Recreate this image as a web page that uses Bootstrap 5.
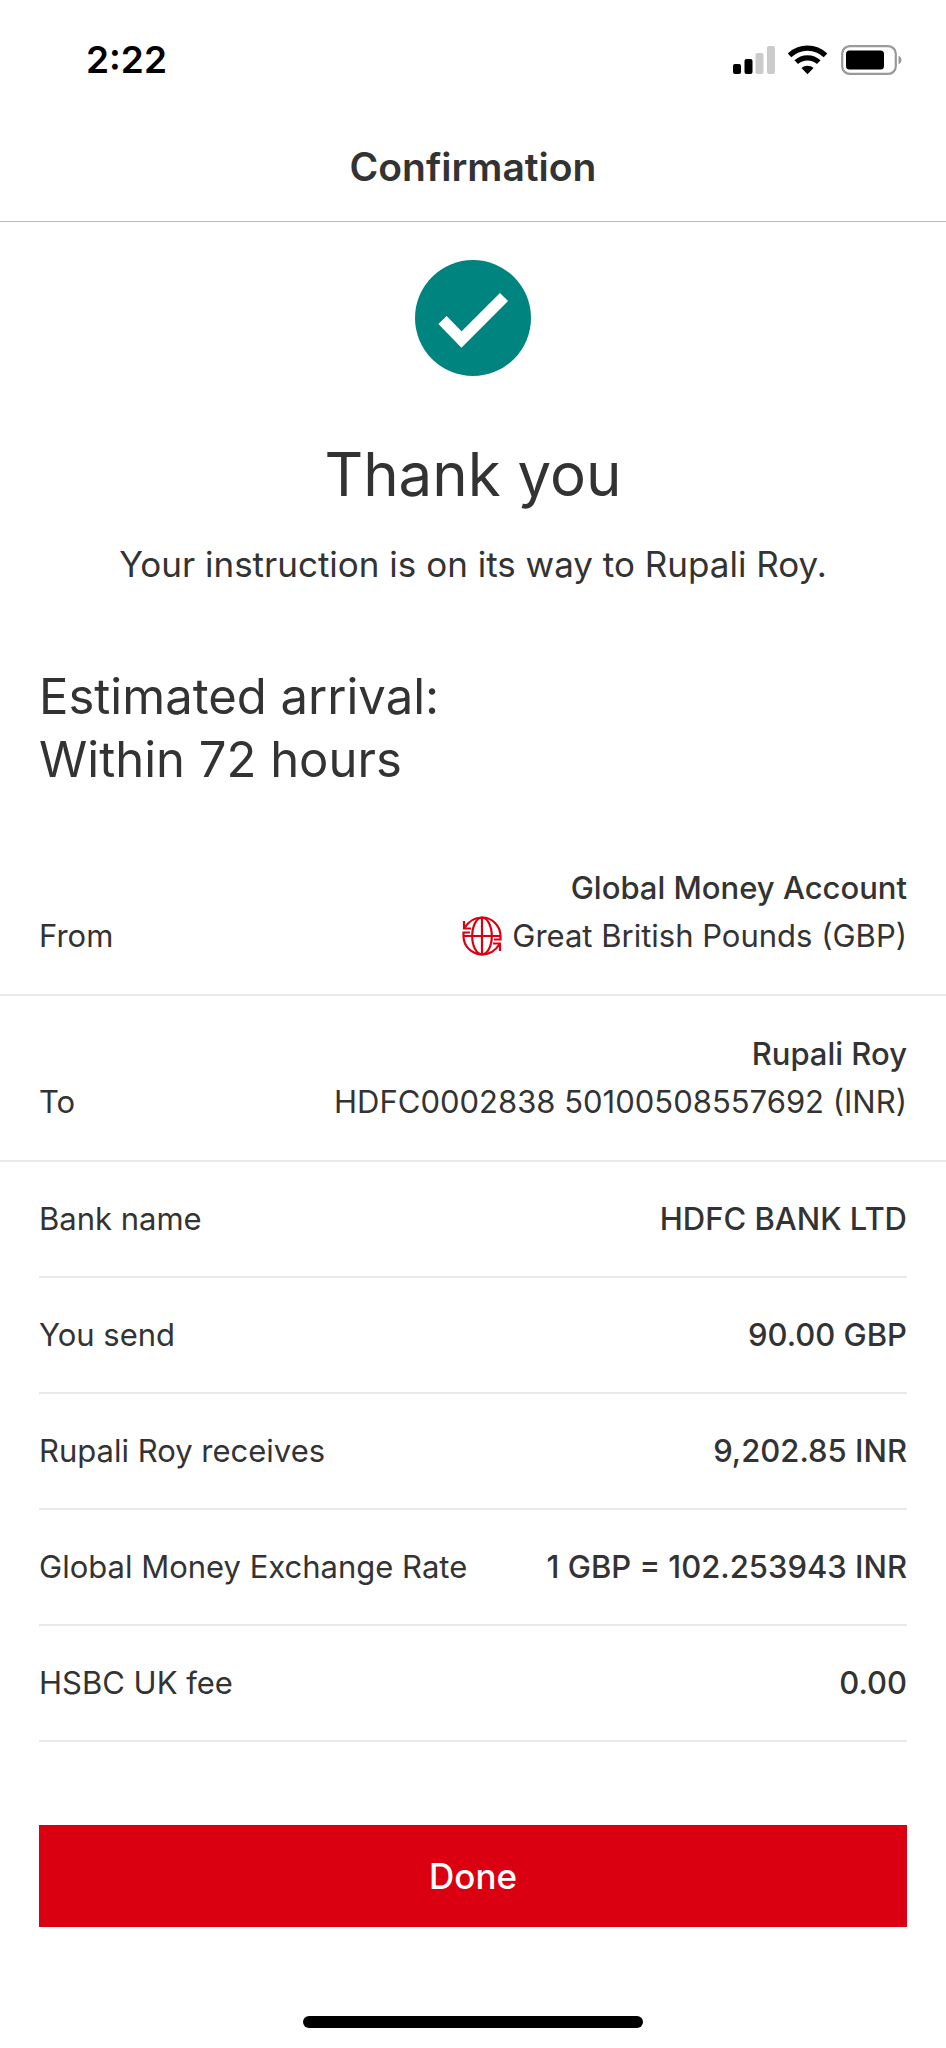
<!DOCTYPE html>
<html lang="en">
<head>
<meta charset="utf-8">
<meta name="viewport" content="width=device-width, initial-scale=1">
<title>Confirmation</title>
<link href="https://cdn.jsdelivr.net/npm/bootstrap@5.3.0/dist/css/bootstrap.min.css" rel="stylesheet">
<style>
  body { font-family: Inter, "Liberation Sans", sans-serif; font-size: 31px; line-height: 48px; color: #333; background: #fff; }
  .status-bar { height: 120px; padding: 0 43px 0 86px; color: #000; }
  .status-icons { gap: 13px; }
  .clock { font-size: 37px; font-weight: 600; }
  .title-bar { height: 102px; padding-top: 23px; border-bottom: 1px solid #bbb; }
  .title-bar h1 { font-size: 39px; line-height: 48px; font-weight: 600; }
  .side-pad { padding-left: 39px; padding-right: 39px; }
  .done-mark { margin: 38px 0 60px; }
  .thanks { font-size: 60px; line-height: 76px; font-weight: 400; margin-bottom: 28px; }
  .message { font-size: 35px; margin-bottom: 77px; }
  .arrival { font-size: 49px; line-height: 63px; font-weight: 400; margin-bottom: 39px; }
  .party { padding-top: 34px; padding-bottom: 34px; border-bottom: 2px solid #e9e9e9; }
  .currency { gap: 10px; }
  .detail { padding: 33px 0; border-bottom: 2px solid #e9e9e9; }
  dt { font-weight: 400; }
  .strong-text { font-weight: 500; }
  .btn-done { --bs-btn-color: #fff; --bs-btn-bg: #db0011; --bs-btn-hover-color: #fff; --bs-btn-hover-bg: #ba0010; --bs-btn-active-color: #fff; --bs-btn-active-bg: #a0000e;
    --bs-btn-font-size: 35px; --bs-btn-line-height: 48px; --bs-btn-font-weight: 500; --bs-btn-padding-y: 27px; --bs-btn-border-width: 0; margin-top: 83px; }
  .home-bar { width: 36%; height: 12px; margin-bottom: 20px; background: #000; }
</style>
</head>
<body class="d-flex flex-column min-vh-100">
<header>
  <div class="status-bar d-flex align-items-center justify-content-between">
    <span class="clock">2:22</span>
    <div class="status-icons d-flex align-items-center">
      <svg width="42" height="30" viewBox="0 0 42 30" role="img" aria-label="Signal, two of four bars">
        <rect x="0" y="19" width="8" height="10" rx="2"/><rect x="11.500" y="14" width="8" height="15" rx="2"/>
        <g fill="#cbcbcb"><rect x="22.500" y="8" width="8" height="21" rx="2"/><rect x="34" y="1" width="8" height="28" rx="2"/></g>
      </svg>
      <svg width="40" height="30" viewBox="0 0 40 30" role="img" aria-label="Wi-Fi">
        <g fill="none" stroke="#000" stroke-width="5.200"><path d="M1.500 10.300C11.500 .600 27.500 .600 37.500 10.300"/><path d="M8.200 17.200C14.500 11.300 24.500 11.300 30.800 17.200"/></g>
        <path d="M19.500 29.300l-6-6.200c3.400-3 8.600-3 12 0z"/>
      </svg>
      <svg width="62" height="30" viewBox="0 0 62 30" role="img" aria-label="Battery">
        <rect x="1.200" y="1.200" width="53.600" height="27.600" rx="7.500" fill="none" stroke="#999" stroke-width="2.200"/>
        <rect x="5" y="5.500" width="38" height="19" rx="3.500"/>
        <path d="M57.500 10.800c4 1.400 4 7 0 8.400z" fill="#999"/>
      </svg>
    </div>
  </div>
  <div class="title-bar text-center"><h1 class="m-0">Confirmation</h1></div>
</header>

<main>
  <section class="side-pad text-center">
    <svg class="done-mark d-block mx-auto" width="116" height="116" viewBox="0 0 116 116" aria-hidden="true">
      <circle cx="58" cy="58" r="58" fill="#00847f"/>
      <path d="M27.500 60L46.500 79.500L89 37" fill="none" stroke="#fff" stroke-width="11.500"/>
    </svg>
    <h2 class="thanks">Thank you</h2>
    <p class="message">Your instruction is on its way to Rupali Roy.</p>
  </section>
  <h3 class="arrival side-pad">Estimated arrival:<br>Within 72 hours</h3>

  <dl class="m-0">
    <div class="party side-pad d-flex justify-content-between align-items-end">
      <dt>From</dt>
      <dd class="m-0 text-end">
        <div class="strong-text">Global Money Account</div>
        <div class="currency d-flex align-items-center justify-content-end">
          <svg width="40" height="40" viewBox="0 0 40 40" fill="none" stroke="#db0011" stroke-width="2.200" aria-hidden="true">
            <path d="M2 12.500C6 6 11 1.500 20 1.500A18.500 18.500 0 0 1 38.500 20V23.500H32"/>
            <path d="M38 27.500C34 34 29 38.500 20 38.500A18.500 18.500 0 0 1 1.500 20V16.500H8"/>
            <path d="M1.500 20H38.500M20 1.500V38.500"/>
            <ellipse cx="20" cy="20" rx="9.800" ry="18.500"/>
            <path d="M2 5V12.500H9M38 35V27.500H31"/>
          </svg>
          <span>Great British Pounds (GBP)</span>
        </div>
      </dd>
    </div>
    <div class="party side-pad d-flex justify-content-between align-items-end">
      <dt>To</dt>
      <dd class="m-0 text-end">
        <div class="strong-text">Rupali Roy</div>
        <div>HDFC0002838 50100508557692 (INR)</div>
      </dd>
    </div>
    <div class="side-pad">
      <div class="detail d-flex justify-content-between"><dt>Bank name</dt><dd class="strong-text m-0">HDFC BANK LTD</dd></div>
      <div class="detail d-flex justify-content-between"><dt>You send</dt><dd class="strong-text m-0">90.00 GBP</dd></div>
      <div class="detail d-flex justify-content-between"><dt>Rupali Roy receives</dt><dd class="strong-text m-0">9,202.85 INR</dd></div>
      <div class="detail d-flex justify-content-between"><dt>Global Money Exchange Rate</dt><dd class="strong-text m-0">1 GBP = 102.253943 INR</dd></div>
      <div class="detail d-flex justify-content-between"><dt>HSBC UK fee</dt><dd class="strong-text m-0">0.00</dd></div>
    </div>
  </dl>
  <div class="side-pad"><button type="button" class="btn btn-done rounded-0 w-100">Done</button></div>
</main>

<footer class="mt-auto pt-5"><div class="home-bar rounded-pill mx-auto"></div></footer>
<script src="https://cdn.jsdelivr.net/npm/bootstrap@5.3.0/dist/js/bootstrap.bundle.min.js"></script>
</body>
</html>
